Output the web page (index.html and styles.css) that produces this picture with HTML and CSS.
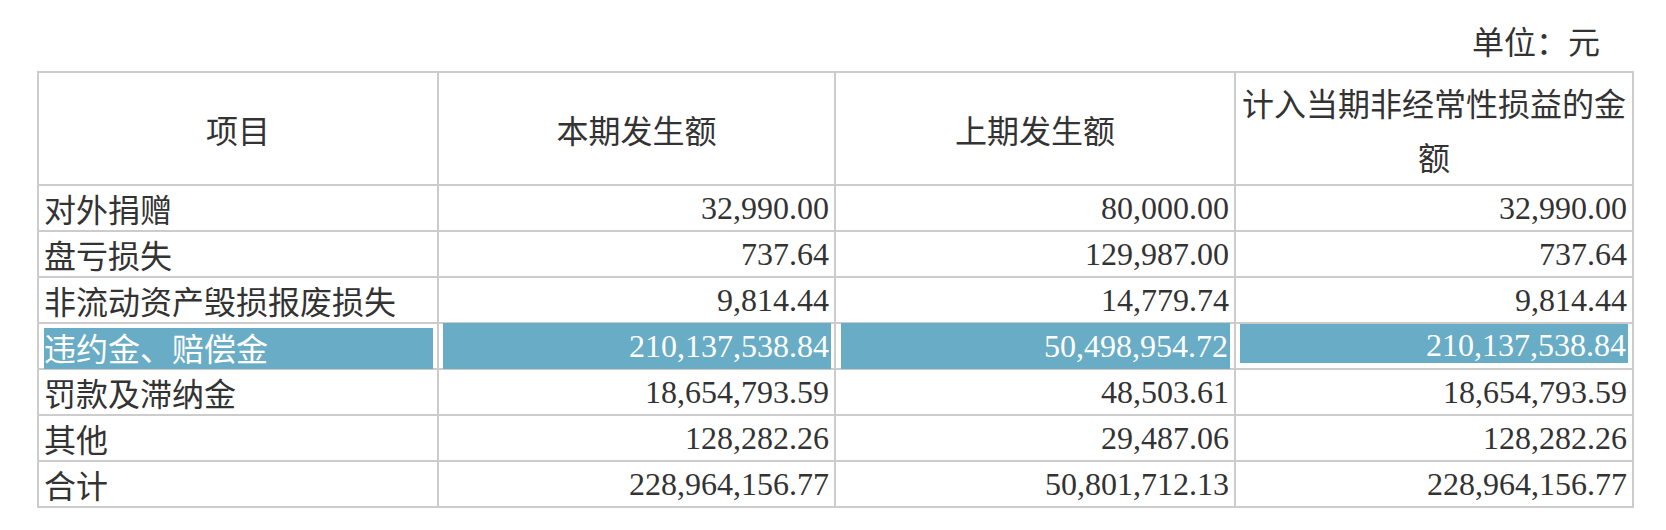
FILE: index.html
```html
<!DOCTYPE html>
<html lang="zh-CN">
<head>
<meta charset="utf-8">
<title>营业外支出</title>
<link rel="stylesheet" href="styles.css">
</head>
<body>
<div class="page">
  <div class="unit">单位：元</div>
  <table class="report">
    <colgroup>
      <col class="c1"><col class="c2"><col class="c3"><col class="c4">
    </colgroup>
    <thead>
      <tr>
        <th>项目</th>
        <th>本期发生额</th>
        <th>上期发生额</th>
        <th>计入当期非经常性损益的金额</th>
      </tr>
    </thead>
    <tbody>
      <tr><td class="name">对外捐赠</td><td class="num">32,990.00</td><td class="num">80,000.00</td><td class="num">32,990.00</td></tr>
      <tr><td class="name">盘亏损失</td><td class="num">737.64</td><td class="num">129,987.00</td><td class="num">737.64</td></tr>
      <tr><td class="name">非流动资产毁损报废损失</td><td class="num">9,814.44</td><td class="num">14,779.74</td><td class="num">9,814.44</td></tr>
      <tr class="selected">
        <td class="sel"><div class="hl hl-a">违约金、赔偿金</div></td>
        <td class="sel"><div class="hl hl-b num">210,137,538.84</div></td>
        <td class="sel"><div class="hl hl-c num">50,498,954.72</div></td>
        <td class="sel"><div class="hl hl-d num">210,137,538.84</div></td>
      </tr>
      <tr><td class="name">罚款及滞纳金</td><td class="num">18,654,793.59</td><td class="num">48,503.61</td><td class="num">18,654,793.59</td></tr>
      <tr><td class="name">其他</td><td class="num">128,282.26</td><td class="num">29,487.06</td><td class="num">128,282.26</td></tr>
      <tr><td class="name">合计</td><td class="num">228,964,156.77</td><td class="num">50,801,712.13</td><td class="num">228,964,156.77</td></tr>
    </tbody>
  </table>
</div>
</body>
</html>
```
FILE: styles.css
```css
html, body {
  margin: 0;
  padding: 0;
  background: #ffffff;
}

.page {
  padding: 0 32px 0 37px;
  font-family: "Liberation Serif", "Noto Sans CJK SC", serif;
  font-size: 32px;
  color: #333333;
}

.unit {
  text-align: right;
  padding-top: 20px;
  padding-right: 34px;
  line-height: 40px;
  height: 51px;
  font-family: "Noto Sans CJK SC", sans-serif;
}

.report {
  table-layout: fixed;
  border-collapse: separate;
  border-spacing: 0;
  width: 1597px;
  border-top: 2px solid #cccccc;
  border-left: 2px solid #cccccc;
}

.c1 { width: 400px; }
.c2 { width: 397px; }
.c3 { width: 400px; }
.c4 { width: 398px; }

.report th,
.report td {
  box-sizing: border-box;
  border-right: 2px solid #cccccc;
  border-bottom: 2px solid #cccccc;
  padding: 0 5px;
}

.report th {
  height: 113px;
  font-weight: normal;
  line-height: 54px;
  text-align: center;
  vertical-align: middle;
  font-family: "Noto Sans CJK SC", sans-serif;
}

.report td {
  height: 46px;
  line-height: 44px;
  vertical-align: top;
  white-space: nowrap;
}

.report td.name {
  text-align: left;
  font-family: "Noto Sans CJK SC", sans-serif;
}

.num {
  text-align: right;
  font-family: "Liberation Serif", serif;
}

.report td.sel {
  padding: 0;
}

.hl {
  background: #69acc5;
  color: #ffffff;
  line-height: 44px;
}

.hl-a {
  font-family: "Noto Sans CJK SC", sans-serif;
  margin: 4px 4px -1px 5px;
  height: 41px;
  line-height: 38px;
}

.hl-b {
  margin: -1px 3px -1px 4px;
  height: 46px;
  line-height: 46px;
  padding-right: 2px;
}

.hl-c {
  margin: -1px 4px -1px 5px;
  height: 46px;
  line-height: 46px;
  padding-right: 2px;
}

.hl-d {
  margin: 0 4px 5px 4px;
  height: 39px;
  line-height: 42px;
  padding-right: 2px;
}
```
